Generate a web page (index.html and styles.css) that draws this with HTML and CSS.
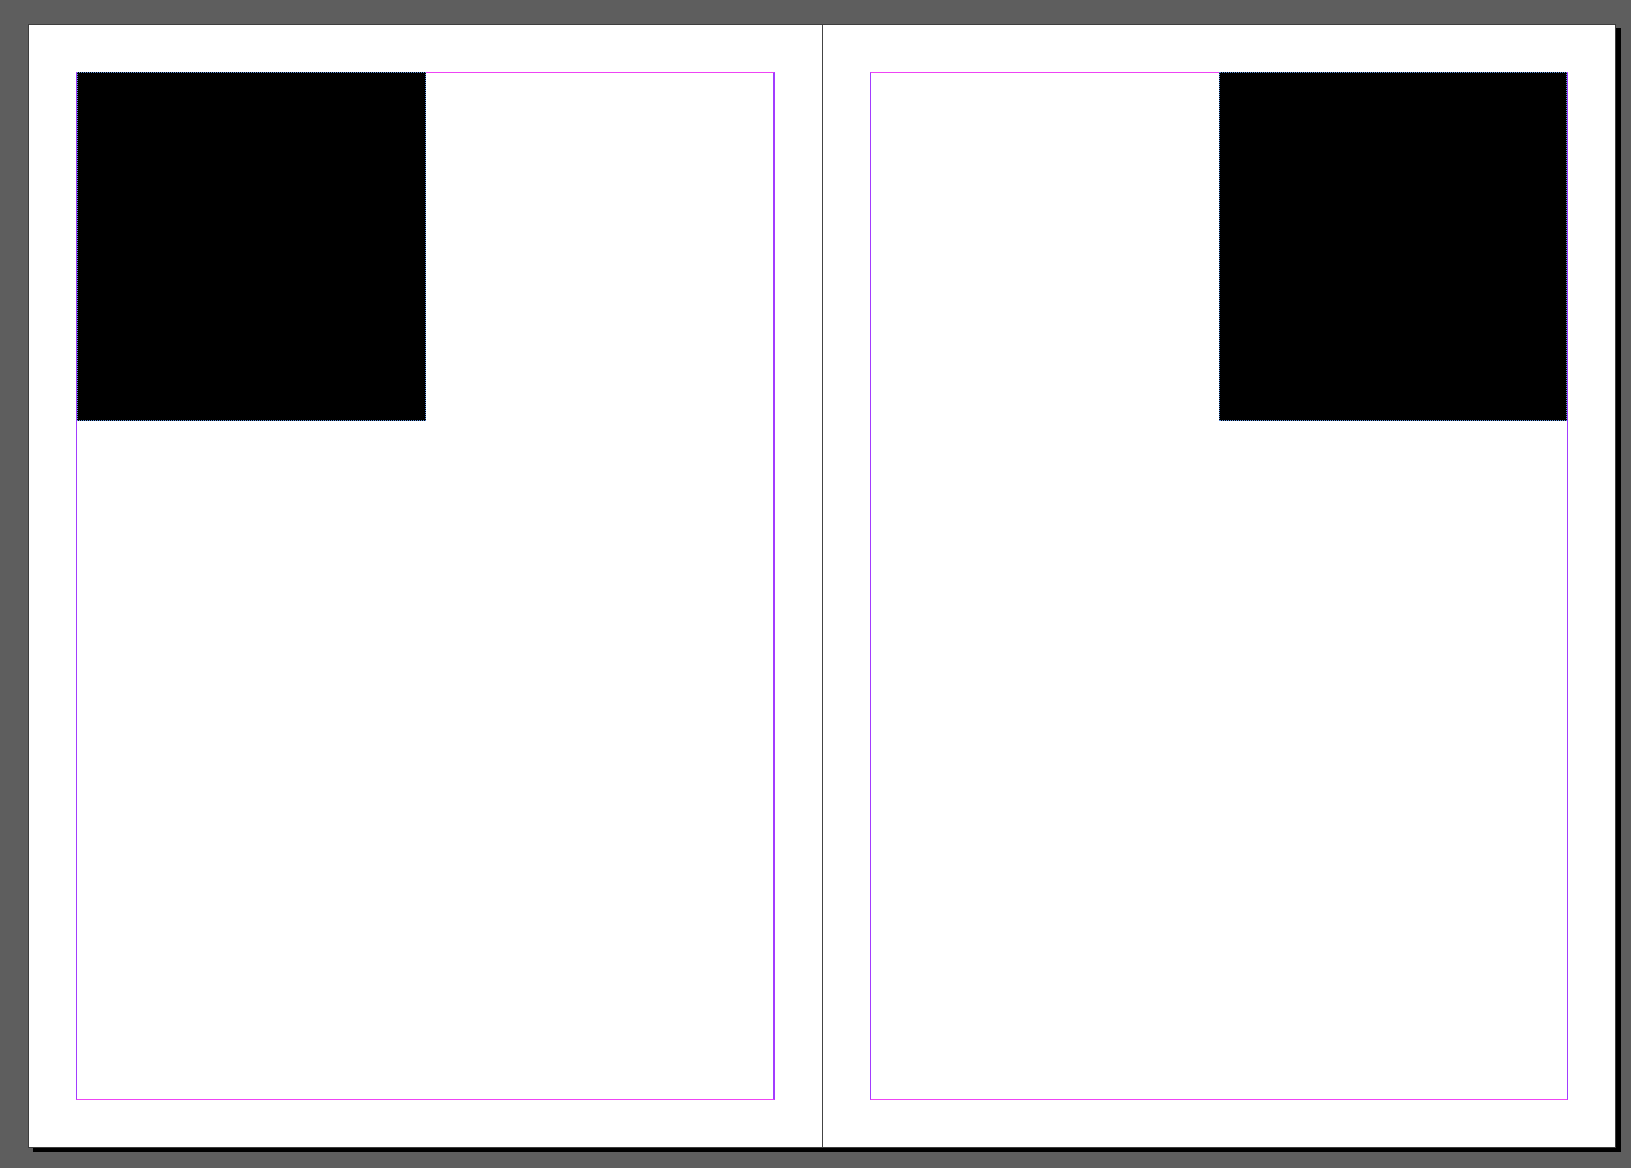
FILE: index.html
```html
<!DOCTYPE html>
<html>
<head>
<meta charset="utf-8">
<link rel="stylesheet" href="styles.css">
</head>
<body>
<div class="spread">
  <div class="page page-left">
    <div class="margins margins-left">
      <div class="frame"></div>
    </div>
  </div>
  <div class="spine"></div>
  <div class="page page-right">
    <div class="margins margins-right">
      <div class="frame frame-right"></div>
    </div>
  </div>
</div>
</body>
</html>
```

FILE: styles.css
```css
html, body {
  margin: 0;
  padding: 0;
  background: #5e5e5e;
  width: 1631px;
  height: 1168px;
  overflow: hidden;
}

.spread {
  margin: 24px 0 0 28px;
  width: 1586px;
  height: 1122px;
  border: 1px solid #3e3e3e;
  background: #ffffff;
  box-shadow: 5px 4px 0 #000000;
  display: flex;
}

.page {
  box-sizing: border-box;
  padding: 47px 0 0 47px;
}

.page-left {
  width: 793px;
}

.page-right {
  width: 792px;
}

.spine {
  width: 1px;
  background: #444444;
}

.margins {
  box-sizing: border-box;
  height: 1028px;
  border-top: 1px solid #ee44f4;
  border-bottom: 1px solid #ee44f4;
  border-left: 1px solid #a23cff;
  display: flex;
  align-items: flex-start;
}

.margins-left {
  width: 699px;
  border-right: 2px solid #a23cff;
  justify-content: flex-start;
}

.margins-right {
  width: 698px;
  border-right: 1px solid #a23cff;
  justify-content: flex-end;
}

.frame {
  box-sizing: border-box;
  width: 349px;
  height: 349px;
  margin-top: -1px;
  background: #000000;
  border: 1px dotted #5f93dd;
}

.frame-right {
  width: 348px;
}
```
